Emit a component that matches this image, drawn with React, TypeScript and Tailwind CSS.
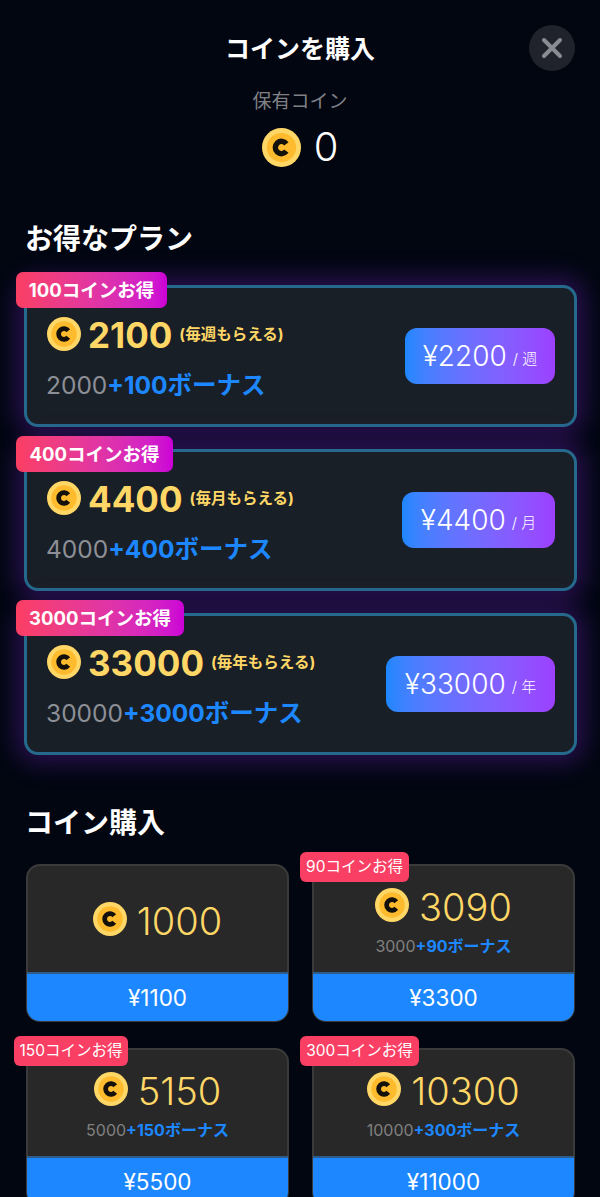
const font = "font-['Inter','Noto_Sans_CJK_JP',sans-serif]";

function Coin({ size }: { size: number }) {
  return (
    <svg width={size} height={size} viewBox="0 0 40 40" className="shrink-0">
      <circle cx="20" cy="20" r="20" fill="#ffd766" />
      <circle cx="20" cy="20" r="15" fill="#fdbb2d" />
      <path d="M25 16.2a6.3 6.3 0 1 0 0 7.6" fill="none" stroke="#14100a" strokeWidth="5.6" />
    </svg>
  );
}

const plans = [
  { badge: "100コインお得", badgeW: "w-[151px]", total: "2100", note: "(毎週もらえる)", base: "2000", bonus: "+100ボーナス", price: "¥2200", per: "週", btn: "w-[150px]" },
  { badge: "400コインお得", badgeW: "w-[157px]", total: "4400", note: "(毎月もらえる)", base: "4000", bonus: "+400ボーナス", price: "¥4400", per: "月", btn: "w-[153px]" },
  { badge: "3000コインお得", badgeW: "w-[168px]", total: "33000", note: "(毎年もらえる)", base: "30000", bonus: "+3000ボーナス", price: "¥33000", per: "年", btn: "w-[169px]" },
];

const packs = [
  { badge: "", badgeW: "", total: "1000", base: "", bonus: "", price: "¥1100" },
  { badge: "90コインお得", badgeW: "w-[109px]", total: "3090", base: "3000", bonus: "+90ボーナス", price: "¥3300" },
  { badge: "150コインお得", badgeW: "w-[114px]", total: "5150", base: "5000", bonus: "+150ボーナス", price: "¥5500" },
  { badge: "300コインお得", badgeW: "w-[119px]", total: "10300", base: "10000", bonus: "+300ボーナス", price: "¥11000" },
];

function PlanCard({ plan }: { plan: (typeof plans)[number] }) {
  return (
    <div className="relative ml-6 mr-[23px] h-[142px] rounded-[14px] border-[3px] border-[#256a8c] bg-[#191f26] shadow-[0_0_24px_8px_rgba(112,40,190,0.36)]">
      <div className={`absolute -left-[11px] -top-[16px] flex h-[36px] items-center justify-center rounded-[7px] bg-gradient-to-r from-[#fb3e62] to-[#cc00d6] pt-[1px] text-[18.5px] font-bold text-white ${plan.badgeW}`}>
        {plan.badge}
      </div>
      <div className="flex h-full items-center justify-between pl-[20px] pr-[19px]">
        <div className="flex flex-col pt-[3px]">
          <div className="flex items-center gap-[7px]">
            <Coin size={34} />
            <span className="translate-y-[1px] text-[35px] leading-[44px] font-bold text-[#ffd766]">{plan.total}</span>
            <span className="translate-y-[1px] text-[15.5px] font-bold text-[#ffd766]">{plan.note}</span>
          </div>
          <div className="-ml-[1px] mt-[11px] text-[24.5px] leading-[36px]">
            <span className="text-[#8d8f96]">{plan.base}</span>
            <span className="font-bold text-[#1c87ff]">{plan.bonus}</span>
          </div>
        </div>
        <div className={`flex h-[56px] items-center justify-center gap-[6px] rounded-[12px] bg-gradient-to-r from-[#1c87ff] to-[#9c40ff] text-white ${plan.btn}`}>
          <span className="text-[28px] font-light">{plan.price}</span>
          <span className="pt-[6px] text-[15px] font-light">/ {plan.per}</span>
        </div>
      </div>
    </div>
  );
}

function PackCard({ pack }: { pack: (typeof packs)[number] }) {
  return (
    <div className="relative flex h-[158px] flex-col rounded-[14px] border-2 border-[#3a3a3a] bg-[#282828]">
      {pack.badge && (
        <div className={`absolute -left-[14px] -top-[14px] flex h-[30px] items-center justify-center rounded-[6px] bg-[#f93f63] text-[15.5px] text-white ${pack.badgeW}`}>
          {pack.badge}
        </div>
      )}
      <div className="flex flex-1 flex-col items-center justify-center">
        <div className="flex items-center gap-[10px]">
          <Coin size={34} />
          <span className="translate-y-[2px] text-[38px] leading-[44px] font-light text-[#ffd766]">{pack.total}</span>
        </div>
        {pack.base && (
          <div className="mt-[7px] translate-y-[1px] text-[16px] leading-[22px]">
            <span className="text-[#808080]">{pack.base}</span>
            <span className="font-bold text-[#1c87ff]">{pack.bonus}</span>
          </div>
        )}
      </div>
      <div className="-mx-[1px] -mb-[1px] flex h-[49px] items-center justify-center rounded-b-[13px] border-t-2 border-[#2f5c8c] bg-[#1c87ff] text-[22.5px] text-white">
        {pack.price}
      </div>
    </div>
  );
}

export default function App() {
  return (
    <div className={`h-[1197px] overflow-hidden bg-[#020611] ${font}`}>
      <div className="relative flex h-[89px] items-start justify-center pt-[32px]">
        <h1 className="text-[25px] leading-[34px] font-bold text-white">コインを購入</h1>
        <button className="absolute right-[25px] top-[25px] flex h-[46px] w-[46px] items-center justify-center rounded-full bg-[#20232b]">
          <svg width="22" height="22" viewBox="0 0 22 22">
            <path d="M3 3l16 16M19 3L3 19" stroke="#8a8c94" strokeWidth="4" strokeLinecap="round" />
          </svg>
        </button>
      </div>
      <div className="flex flex-col items-center">
        <div className="text-[19px] leading-[26px] text-[#7f8085]">保有コイン</div>
        <div className="mt-[10px] flex items-center gap-[13px]">
          <Coin size={39} />
          <span className="text-[40px] leading-[44px] font-light text-white">0</span>
        </div>
      </div>
      <h2 className="mt-[51px] pl-[25px] text-[28px] leading-[38px] font-bold text-white">お得なプラン</h2>
      <div className="mt-[27px] flex flex-col gap-[22px]">
        {plans.map((plan) => (
          <PlanCard key={plan.total} plan={plan} />
        ))}
      </div>
      <h2 className="mt-[49px] pl-[25px] text-[28px] leading-[38px] font-bold text-white">コイン購入</h2>
      <div className="mt-[22px] grid grid-cols-2 gap-x-[23px] gap-y-[26px] pl-[26px] pr-[25px]">
        {packs.map((pack) => (
          <PackCard key={pack.total} pack={pack} />
        ))}
      </div>
    </div>
  );
}
